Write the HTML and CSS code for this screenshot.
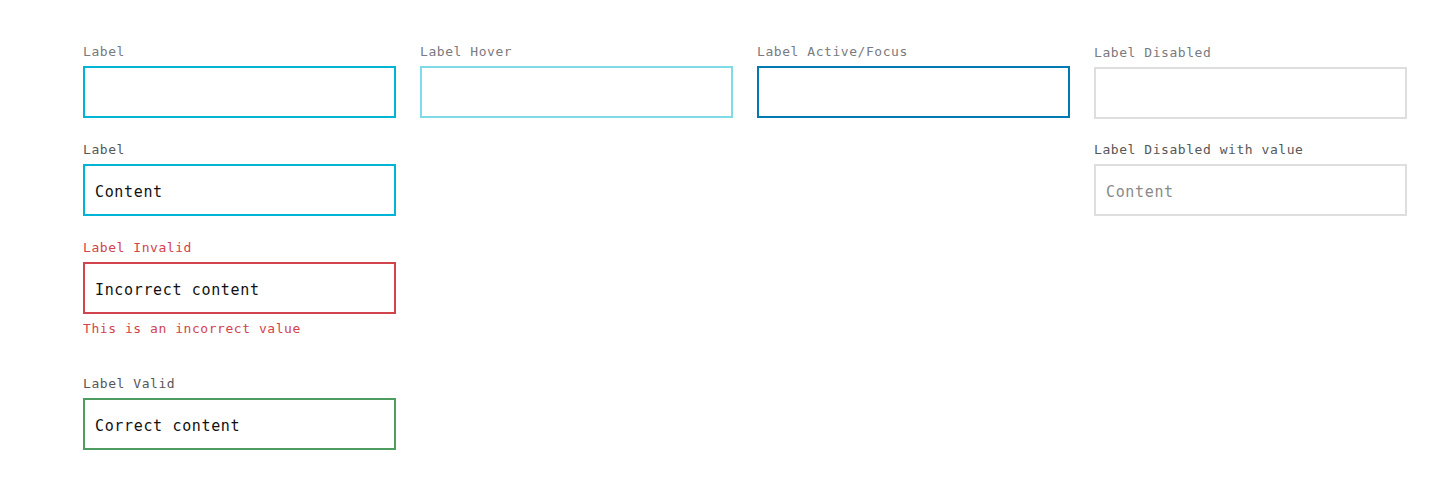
FILE: index.html
```html
<!DOCTYPE html>
<html lang="en">
<head>
<meta charset="utf-8">
<title>Inputs</title>
<link rel="stylesheet" href="styles.css">
</head>
<body>
<div class="page">
  <div class="col">
    <div class="field">
      <label class="label label-light">Label</label>
      <div class="input input-default"></div>
    </div>
    <div class="field">
      <label class="label">Label</label>
      <div class="input input-default">Content</div>
    </div>
    <div class="field field-invalid">
      <label class="label label-error">Label Invalid</label>
      <div class="input input-invalid">Incorrect content</div>
      <div class="error-msg">This is an incorrect value</div>
    </div>
    <div class="field">
      <label class="label">Label Valid</label>
      <div class="input input-valid">Correct content</div>
    </div>
  </div>
  <div class="col">
    <div class="field">
      <label class="label label-light">Label Hover</label>
      <div class="input input-hover"></div>
    </div>
  </div>
  <div class="col">
    <div class="field">
      <label class="label label-light">Label Active/Focus</label>
      <div class="input input-focus"></div>
    </div>
  </div>
  <div class="col col-disabled">
    <div class="field">
      <label class="label label-light">Label Disabled</label>
      <div class="input input-disabled"></div>
    </div>
    <div class="field">
      <label class="label">Label Disabled with value</label>
      <div class="input input-disabled">Content</div>
    </div>
  </div>
</div>
</body>
</html>
```
FILE: styles.css
```css
* { box-sizing: border-box; }
html, body { margin: 0; padding: 0; background: #ffffff; }
body {
  font-family: "DejaVu Sans Mono", "Liberation Mono", monospace;
  color: #111;
}
.page {
  display: flex;
  gap: 24px;
  padding: 42px 0 0 83px;
}
.col {
  width: 313px;
  display: flex;
  flex-direction: column;
}
.col-disabled { padding-top: 1px; }
.field {
  display: flex;
  flex-direction: column;
  margin-bottom: 22px;
}
.col-disabled .field { margin-bottom: 21px; }
.field-invalid { margin-bottom: 35px; }
.label {
  display: block;
  font-size: 13px;
  line-height: 20px;
  color: #575757;
  margin-bottom: 4px;
  letter-spacing: 0.55px;
}
.label-light { color: #7a7a80; }
.label-error { color: #d2434b; }
.input {
  height: 52px;
  border: 2px solid #00b4d5;
  padding: 3px 10px 0;
  display: flex;
  align-items: center;
  font-size: 15px;
  letter-spacing: 0.65px;
  color: #111;
}
.input-default { border-color: #00b4d5; }
.input-hover { border-color: #80dbe9; }
.input-focus { border-color: #0079b5; }
.input-disabled { border-color: #dedede; color: #8a8a8a; }
.input-invalid { border-color: #d2434b; }
.input-valid { border-color: #4e9c60; }
.error-msg {
  margin-top: 5px;
  font-size: 13px;
  line-height: 20px;
  color: #d2434b;
  letter-spacing: 0.55px;
}
```
